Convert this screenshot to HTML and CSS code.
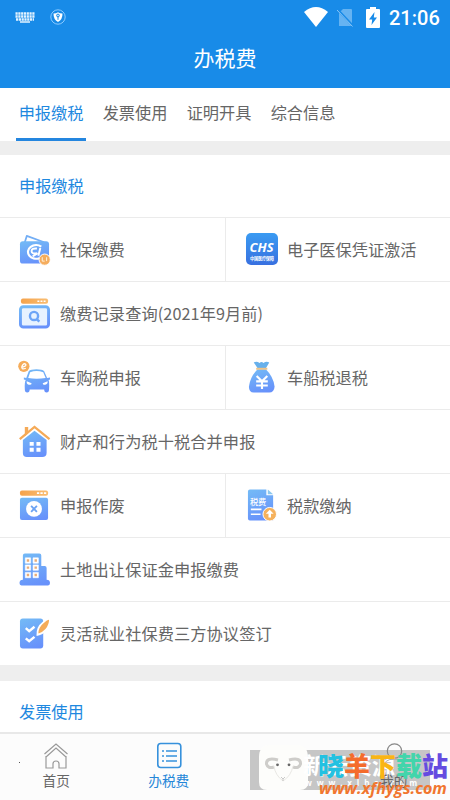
FILE: index.html
```html
<!DOCTYPE html>
<html lang="zh-CN">
<head>
<meta charset="utf-8">
<title>办税费</title>
<link rel="stylesheet" href="styles.css">
</head>
<body>
<svg class="defs" width="0" height="0" aria-hidden="true">
  <defs>
    <linearGradient id="blue" x1="0.3" y1="0" x2="0.6" y2="1"><stop offset="0" stop-color="#73b8f6"/><stop offset="1" stop-color="#6791fb"/></linearGradient>
    <linearGradient id="orange" x1="0" y1="0" x2="1" y2="0"><stop offset="0" stop-color="#f5a34b"/><stop offset="1" stop-color="#f9bd72"/></linearGradient>
    <linearGradient id="chs" x1="0" y1="0" x2="0" y2="1"><stop offset="0" stop-color="#3a9bf2"/><stop offset="1" stop-color="#3870e0"/></linearGradient>
  </defs>
</svg>
<div class="app">
  <header class="header">
    <div class="status">
      <svg class="keyboard" viewBox="0 0 20 11"><path d="M.5 1.500H19.500M.5 4.500H19.500M1 7.500H19" stroke="#e3f3ff" stroke-width="2.300" stroke-dasharray="2.200 .6"/><path d="M5 10H15" stroke="#e3f3ff" stroke-width="1.500"/></svg>
      <svg class="shield" viewBox="0 0 16 16"><circle cx="8" cy="8" r="7.200" fill="none" stroke="#8bcaff"/><path d="M3.500 4.600Q6.500 4.600 8 3.300Q9.500 4.600 12.500 4.600Q12.700 10.500 8 13Q3.300 10.500 3.500 4.600Z" fill="#fff"/><path d="M8 6.500V10.800" stroke="#188be8"/><circle cx="8" cy="6.500" r="1.400" fill="none" stroke="#188be8"/></svg>
      <svg class="wifi" viewBox="0 0 24 20"><path d="M0 5Q12-5 24 5L12 20Z" fill="#fff"/></svg>
      <svg class="sim" viewBox="0 0 16 19"><path d="M6 1H14Q15 1 15 2V18H2V5Z" fill="#65b3f2"/><path d="M0 1L16 18" stroke="#188be8" stroke-width="2.500"/><path d="M0 2L15.500 18.500" stroke="#8bc6f6"/></svg>
      <svg class="battery" viewBox="0 0 14 21"><path d="M4 0H10V2H13Q14 2 14 3V20Q14 21 13 21H1Q0 21 0 20V3Q0 2 1 2H4Z" fill="#fff"/><path d="M8.500 5L3 12.500H6.200L5.500 18L11 10.500H7.800Z" fill="#188be8"/></svg>
      <span class="time">21:06</span>
    </div>
    <h1>办税费</h1>
  </header>
  <nav class="tabs"><a class="active">申报缴税</a><a>发票使用</a><a>证明开具</a><a>综合信息</a></nav>
  <main>
    <section>
      <h2>申报缴税</h2>
      <div class="grid">
        <div class="cell">
          <svg class="icon" viewBox="0 0 32 32"><path d="M6 9L8 2.500L26 9" fill="none" stroke="#73aef5" stroke-width="1.800" stroke-linejoin="round"/><rect x="1" y="8" width="30" height="23" rx="3" fill="url(#blue)"/><path d="M23 13.500A8.500 7 0 1 0 21 25.500" fill="none" stroke="#fff" stroke-width="2.200"/><path d="M18.500 15.500Q13 15 13 18T17 20.500T14 23.500M22 15L20 23" fill="none" stroke="#fff" stroke-width="2"/><circle cx="26.500" cy="27" r="5.800" fill="#f5ad5e" stroke="#fff"/><path d="M24 24.500V28.500H26.500M28.500 24.500V28.500" fill="none" stroke="#fff3df"/></svg>
          <span>社保缴费</span>
        </div>
        <div class="cell right">
          <svg class="icon chs" viewBox="0 0 32 32"><rect width="32" height="32" rx="5" fill="url(#chs)"/><text x="15.600" y="19" text-anchor="middle" class="chs-name">CHS</text><text x="4" y="26.500" textLength="24" class="chs-sub">中国医疗保障</text></svg>
          <span>电子医保凭证激活</span>
        </div>
        <div class="cell wide">
          <svg class="icon" viewBox="0 0 32 32"><rect x="2" y="1" width="28" height="5.500" rx="2" fill="url(#orange)"/><path d="M19 3.800H28" stroke="#fff" stroke-width="1.500" stroke-dasharray="2 1.200"/><rect x="1.500" y="9.500" width="29" height="21" rx="3" fill="#e7f2ff" stroke="url(#blue)" stroke-width="3"/><circle cx="15.500" cy="19" r="4.200" fill="none" stroke="#6ca4f7" stroke-width="2.500"/><path d="M18 22L21 25" stroke="#6ca4f7" stroke-width="2.500"/></svg>
          <span>缴费记录查询(2021年9月前)</span>
        </div>
        <div class="cell">
          <svg class="icon" viewBox="0 0 32 32"><path d="M10 10Q12 8 18 8T26 10L29 17L32 16.500V18.500L30.500 19Q31.500 21 31 29Q31 32 28.500 32Q26 32 26 29H11Q11 32 8.500 32Q6 32 6 29Q5.500 21 7 19L5 18.500V16.500L7.500 17Z" fill="url(#blue)"/><path d="M11.500 11Q18 8.800 25 11L27.500 17Q18 18.500 9.500 17Z" fill="#fff"/><path d="M8 20.500L13 22.500Q13 24.500 10 24Q7.500 23.500 8 20.500M29.500 20.500L24.500 22.500Q24.500 24.500 27 24Q30 23.500 29.500 20.500" fill="#fff"/><circle cx="5" cy="5" r="5.800" fill="#f5ac5a"/><path d="M3 6Q8 5 7 3Q5 1 3 5Q2 9 7 7" fill="none" stroke="#fff" stroke-width="1.300"/></svg>
          <span>车购税申报</span>
        </div>
        <div class="cell right">
          <svg class="icon" viewBox="0 0 32 32"><path d="M8 1Q11-.5 14 1.500Q16-.5 18 1.500Q21-.5 24 1L20.500 7H12Z" fill="#67b0eb"/><path d="M12 8H20.500Q28.500 16 29.500 26Q29 32 24 32H8Q3 32 3 26Q4 16 12 8Z" fill="url(#blue)"/><path d="M10.500 7.500H22" stroke="#efc387" stroke-width="2"/><path d="M11 15L16.500 20.500L22 15M16.500 20V28.500M10.500 20.500H22.500M10.500 24.800H22.500" fill="none" stroke="#fff" stroke-width="2.200"/></svg>
          <span>车船税退税</span>
        </div>
        <div class="cell wide">
          <svg class="icon" viewBox="0 0 32 32"><path d="M4 15L16 5.500L28.500 15V28Q28.500 32.500 24 32.500H8Q4 32.500 4 28Z" fill="url(#blue)"/><path d="M6 11V1.500H9.500V8" fill="#f5aa57"/><path d="M.8 14L16 1.500L31.500 14" fill="none" stroke="#f5aa57" stroke-width="2.400"/><path d="M11 17H15.200V21H11ZM18 17H22.200V21H18ZM11 23H15.200V27H11ZM18 23H22.200V27H18Z" fill="#fff"/></svg>
          <span>财产和行为税十税合并申报</span>
        </div>
        <div class="cell">
          <svg class="icon" viewBox="0 0 32 32"><rect x="1" y="1" width="29" height="5.500" rx="2" fill="url(#orange)"/><path d="M18.500 3.800H28.500" stroke="#fff" stroke-width="1.700" stroke-dasharray="2.400 1.200"/><rect x="1" y="8.500" width="29" height="23" rx="2" fill="url(#blue)"/><circle cx="15.500" cy="20" r="8.200" fill="#fff"/><path d="M12.500 17L18.500 23M18.500 17L12.500 23" stroke="#6ba3f3" stroke-width="1.900"/></svg>
          <span>申报作废</span>
        </div>
        <div class="cell right">
          <svg class="icon" viewBox="0 0 32 32"><path d="M4 0H21V6H28V32H4Q2 32 2 30V2Q2 0 4 0Z" fill="url(#blue)"/><path d="M22.500 0L28 5H22.500Z" fill="#8cc8ef"/><text x="4" y="15.500" class="bill">税费</text><path d="M5 20.500H16M5 25.500H15" stroke="#fff" stroke-width="1.600"/><circle cx="24.500" cy="25.500" r="7" fill="#f5b15c" stroke="#fff"/><path d="M24.500 21L28.500 25H25.800V29H23.200V25H20.500Z" fill="#fff"/></svg>
          <span>税款缴纳</span>
        </div>
        <div class="cell wide">
          <svg class="icon" viewBox="0 0 32 32"><path d="M4 27V2Q4 0 6 0H21Q23 0 23 2V13H26.500Q28.500 13 28.500 15V27Q32 27 32 30.500Q32 33 30 33H2.500Q.5 33 .5 30.500Q.5 27 4 27Z" fill="url(#blue)"/><path d="M6.500 4.500H12V10H6.500ZM14.500 4.500H20V10H14.500ZM6.500 11.800H12V17.300H6.500ZM14.500 11.800H20V17.300H14.500ZM6.500 19.500H12V25H6.500ZM14.500 19.500H20V25H14.500Z" fill="#fff" stroke="#fff" stroke-width=".6" stroke-linejoin="round"/><path d="M8 7.200H10.500M16 7.200H18.500M8 14.500H10.500M16 14.500H18.500M8 22.200H10.500M16 22.200H18.500" stroke="#e8ad7a" stroke-width="2.400"/></svg>
          <span>土地出让保证金申报缴费</span>
        </div>
        <div class="cell wide">
          <svg class="icon" viewBox="0 0 32 32"><rect x="1" y="1" width="24" height="31" rx="3" fill="url(#blue)"/><path d="M7 11L10.500 14L16 9.500M7 21.500L10.500 24.500L16 20" fill="none" stroke="#fff" stroke-width="2.500"/><path d="M32 1Q32 8 28 12.500Q24 17 19 18Q18.500 10 25 5Q28 2 32 1Z" fill="#f5ac59" stroke="#fff" stroke-width="1.800"/></svg>
          <span>灵活就业社保费三方协议签订</span>
        </div>
      </div>
    </section>
    <section class="next"><h2>发票使用</h2></section>
  </main>
  <footer class="bottom">
    <a><svg viewBox="0 0 26 27"><path d="M1.500 12L13 2L24.500 12M3 14V26H10V22Q10 19 13 19T16 22V26H23V14M3 15L13 6L23 15" fill="none" stroke="#999" stroke-width="1.200"/></svg><span>首页</span></a>
    <a class="active"><svg viewBox="0 0 26 27"><rect x="1.800" y="1.500" width="23" height="24" rx="3" fill="none" stroke="#3691dc" stroke-width="1.600"/><path d="M6 9H8M10 9H21M6 14H8M10 14H21M6 19H8M10 19H21" stroke="#3691dc" stroke-width="1.600"/></svg><span>办税费</span></a>
    <a></a>
    <a><svg viewBox="0 0 26 27"><circle cx="13.500" cy="9" r="7.200" fill="none" stroke="#888" stroke-width="1.200"/><path d="M2 26Q3 17 13 17T24 26" fill="none" stroke="#aaa"/></svg><span>我的</span></a>
    <i class="dot"></i>
    <svg class="watermark" viewBox="0 0 200 60"><path d="M0 10H180V50H0Z" fill="#c6c6c6"/><path d="M9 17Q9 4 22 5H46Q58 4 58 18V42Q58 50 50 50H17Q9 50 9 42Z" fill="#fdfdfb"/><path d="M24 27Q18 29 16.500 24Q16 17 28 20M43 27Q49 29 50.500 24Q51 17 39 20" fill="none" stroke="#cecdca" stroke-width="3"/><path d="M24 26Q25 35 33 41Q41 36 43 26" fill="none" stroke="#e9e8e4"/><path d="M31 37L33 39L35 37M33 39V41" fill="none" stroke="#bbb" stroke-width=".8"/><circle cx="27.500" cy="24.800" r="1.400" fill="#666"/><circle cx="39" cy="24.800" r="1.400" fill="#666"/><text x="53" y="34" class="mark-white">新云资源</text><text x="55" y="46" class="mark-url" textLength="112">www.xlhs.com</text></svg>
    <div class="mark-name"><b>晓</b><b>羊</b><b>下</b><b>载</b><b>站</b></div>
    <div class="mark-domain">www.xfhygs.com</div>
  </footer>
</div>
</body>
</html>
```
FILE: styles.css
```css
* { box-sizing: border-box; }
body { margin: 0; background: #fff; color: #666; font-family: "Noto Sans CJK SC", sans-serif; font-size: 16.2px; }
.defs { position: absolute; }
.app { width: 450px; height: 800px; overflow: hidden; display: flex; flex-direction: column; }
.header { height: 88px; background: #188be8; color: #fff; flex: none; }
.status { height: 34px; display: flex; align-items: center; padding: 0 12px 0 15px; }
.keyboard { width: 20px; height: 11px; margin-right: 15px; }
.shield { width: 16px; height: 16px; }
.wifi { width: 24px; height: 20px; margin-left: auto; margin-right: 9px; }
.sim { width: 16px; height: 19px; margin-right: 13px; }
.battery { width: 14px; height: 21px; margin-right: 9px; }
.time { font: 500 20px/20px Roboto, sans-serif; width: 49px; white-space: nowrap; padding-top: 2px; }
h1 { margin: 0; text-align: center; font-size: 21px; font-weight: 400; line-height: 47px; }
.tabs { height: 53px; display: flex; gap: 14px; padding-left: 16px; flex: none; }
.tabs a { width: 70px; text-align: center; line-height: 48px; border-bottom: 3px solid transparent; white-space: nowrap; }
.tabs .active { color: #1e88df; border-color: #2486df; }
main { flex: 1; min-height: 0; overflow: hidden; border-top: 14px solid #eee; }
h2 { height: 62px; margin: 0; padding-left: 19px; color: #1e88df; font-size: 16.2px; font-weight: 400; line-height: 60px; }
.grid { display: grid; grid-template-columns: 225px 225px; }
.cell { height: 64px; border-top: 1px solid #ebebeb; display: flex; align-items: center; padding: 0 0 2px 19px; white-space: nowrap; }
.cell.right { border-left: 1px solid #ebebeb; padding-left: 20px; }
.cell.wide { grid-column: span 2; letter-spacing: .1px; }
.icon { width: 31px; height: 32px; margin-right: 10px; flex: none; overflow: visible; }
.chs { width: 32px; margin-right: 9px; }
.chs-name { fill: #fff; font: italic 700 13px "Open Sans", sans-serif; }
.chs-sub { fill: #fff; font-size: 4.2px; font-weight: 700; }
.bill { fill: #fff; font-size: 8.5px; font-weight: 500; }
.next { border-top: 16px solid #eee; }
.bottom { height: 68px; border-top: 2px solid #e8e8e8; background: #fcfcfc; display: grid; grid-template-columns: repeat(4, 1fr); position: relative; flex: none; }
.bottom a { position: relative; z-index: 1; display: flex; flex-direction: column; align-items: center; padding-top: 8px; font-size: 13.7px; line-height: 23px; color: #666; }
.bottom a svg { width: 26px; height: 27px; }
.bottom a.active { color: #2586d8; }
.dot { position: absolute; left: 19px; top: 28px; width: 1px; height: 1px; background: #555; }
.watermark { position: absolute; left: 250px; top: 6px; width: 200px; height: 60px; }
.mark-white { fill: #fff; font-size: 23px; font-weight: 700; }
.mark-url { fill: #fff; font: 700 8px "Open Sans", sans-serif; }
.mark-name { position: absolute; z-index: 2; left: 318px; top: 13px; display: flex; font-size: 26px; line-height: 36px; }
.mark-name b { width: 26px; font-weight: 900; }
.mark-name b:nth-child(1) { color: #23c1e1; }
.mark-name b:nth-child(2) { color: #f46c2c; }
.mark-name b:nth-child(3) { color: #f9b515; }
.mark-name b:nth-child(4) { color: #42d5ab; }
.mark-name b:nth-child(5) { color: #654be0; }
.mark-domain { position: absolute; z-index: 2; left: 319px; top: 43px; color: #f1762f; font: italic 700 16.1px/22px "Open Sans", sans-serif; white-space: nowrap; }
```
